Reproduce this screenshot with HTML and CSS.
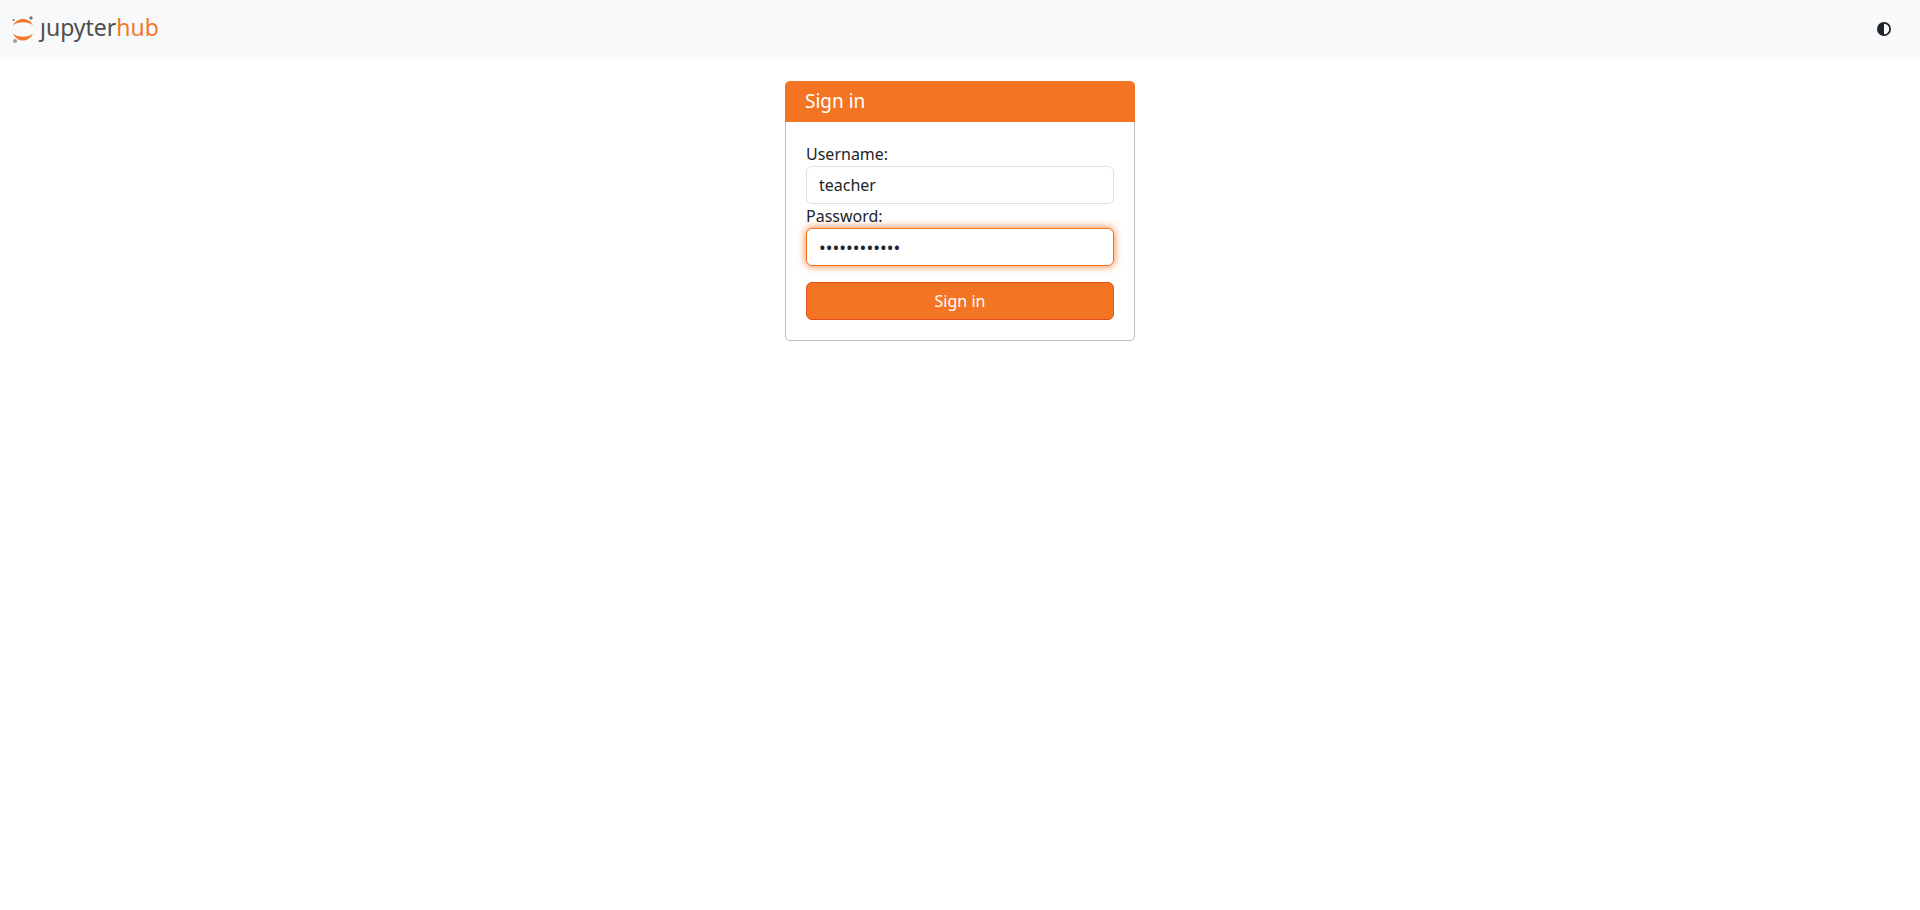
FILE: index.html
```html
<!DOCTYPE html>
<html lang="en">

<head>
    <meta charset="UTF-8">
    <meta name="viewport" content="width=device-width, initial-scale=1.0">
    <title>JupyterHub</title>
    <link rel="stylesheet" href="styles.css">
</head>

<body>
    <nav class="navbar">
        <a class="navbar-brand" href="/hub/" aria-label="jupyterhub">
            <svg class="logo" viewBox="0 0 22 28" width="22" height="28" aria-hidden="true">
                <path fill="#f37726" d="M1 10.500C3 6.200 6.500 4 11 4s8 2.200 10 6.500C18.500 8.300 15 7.200 11 7.200S3.500 8.300 1 10.500z" />
                <path fill="#f37726" d="M1 18.500C3 22.800 6.500 25.500 11 25.500s8-2.700 10-7C18.500 20.700 15 21.800 11 21.800S3.500 20.700 1 18.500z" />
                <circle fill="#767677" cx="19" cy="3" r="1.700" />
                <circle fill="#767677" cx="1.500" cy="5" r="1.100" />
                <circle fill="#9e9e9e" cx="3" cy="26" r="2" />
            </svg>
            <span class="brand-text">&#567;upyter<span class="brand-hub">hub</span></span>
        </a>
        <button class="theme-toggle" type="button" aria-label="Toggle dark mode">
            <svg viewBox="0 0 16 16" width="14" height="14" aria-hidden="true">
                <circle cx="8" cy="8" r="7" fill="none" stroke="currentColor" stroke-width="2" />
                <path d="M8 1a7 7 0 0 0 0 14z" fill="currentColor" />
            </svg>
        </button>
    </nav>

    <main class="container">
        <form class="auth-form" action="/hub/login" method="post">
            <h1 class="auth-form-header">Sign in</h1>
            <div class="auth-form-body">
                <label for="username_input">Username:</label>
                <input id="username_input" class="form-control" type="text" name="username" value="teacher" autocomplete="username">
                <label for="password_input">Password:</label>
                <input id="password_input" class="form-control active" type="password" name="password" value="password1234" autocomplete="current-password">
                <button class="btn-jupyter" type="submit">Sign in</button>
            </div>
        </form>
    </main>
</body>

</html>
```

FILE: styles.css
```css
* {
    box-sizing: border-box;
}

body {
    margin: 0;
    font-family: "Noto Sans", "Open Sans", sans-serif;
    font-size: 16px;
    line-height: 24px;
    color: #212529;
    background-color: #fff;
}

.navbar {
    display: flex;
    align-items: center;
    justify-content: space-between;
    height: 57px;
    padding: 0 29px 0 12px;
    background-color: #f8f9fa;
}

.navbar-brand {
    display: flex;
    align-items: center;
    gap: 6px;
    text-decoration: none;
}

.logo {
    display: block;
}

.brand-text {
    padding-bottom: 3px;
    font-size: 23px;
    line-height: 28px;
    color: #4e4e4e;
}

.brand-hub {
    color: #f37726;
}

.theme-toggle {
    display: flex;
    padding: 0;
    border: none;
    background: none;
    color: #212529;
    cursor: pointer;
}

.container {
    padding: 24px 12px;
}

.auth-form {
    max-width: 350px;
    margin: 0 auto;
}

.auth-form-header {
    margin: 0;
    padding: 8px 20px;
    font-size: 19px;
    font-weight: 400;
    line-height: 25px;
    color: #fff;
    background-color: #f37524;
    border-radius: 5px 5px 0 0;
}

.auth-form-body {
    padding: 20px;
    border: 1px solid #bdbdbd;
    border-top: none;
    border-radius: 0 0 5px 5px;
}

.auth-form-body label {
    display: block;
}

.form-control {
    display: block;
    width: 100%;
    height: 38px;
    padding: 6px 12px;
    font: inherit;
    color: #212529;
    background-color: #fff;
    border: 1px solid #dee2e6;
    border-radius: 6px;
    outline: none;
}

.form-control[type="password"] {
    font-size: 18px;
}

.form-control.active,
.form-control:focus {
    border-color: #f37524;
    box-shadow: 0 0 8px #f37524;
}

.btn-jupyter {
    display: block;
    width: 100%;
    margin-top: 16px;
    padding: 6px 12px;
    font: inherit;
    color: #fff;
    background-color: #f37524;
    border: 1px solid #e34f21;
    border-radius: 6px;
    cursor: pointer;
}

.btn-jupyter:hover {
    background-color: #e34f21;
}
```
